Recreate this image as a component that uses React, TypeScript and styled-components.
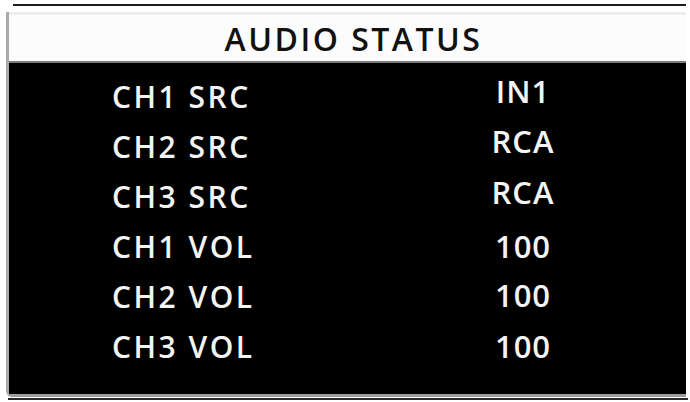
import React from "react";
import styled, { createGlobalStyle } from "styled-components";

const GlobalStyle = createGlobalStyle`
  html, body {
    margin: 0;
    padding: 0;
    background: #ffffff;
  }
  body {
    width: 690px;
    height: 402px;
    overflow: hidden;
    font-family: "Open Sans", "Noto Sans", sans-serif;
  }
`;

const Screen = styled.div`
  width: 690px;
  height: 402px;
  padding-top: 4px;
  box-sizing: border-box;
`;

const TopRule = styled.div`
  height: 2px;
  width: 673px;
  margin-left: 13px;
  background: #1c1c1c;
`;

const Panel = styled.div`
  margin-top: 6px;
  margin-left: 6px;
  width: 680px;
  border-left: 3px solid #a9aaa9;
  border-bottom: 3px solid #9c9d9c;
  border-bottom-left-radius: 6px;
  box-sizing: border-box;
  display: flex;
  flex-direction: column;
`;

const Header = styled.div`
  height: 46px;
  background: #fbfcfb;
  border-top: 3px solid #eceeed;
  border-bottom: 2px solid #7a7b7a;
  display: flex;
  align-items: center;
  justify-content: center;
  padding-left: 12px;
`;

const Title = styled.h1`
  margin: 0;
  font-size: 32px;
  font-weight: 600;
  letter-spacing: 2.5px;
  color: #111111;
`;

const Body = styled.div`
  height: 331px;
  background: #000000;
  box-sizing: border-box;
  padding: 8px 0 0 103px;
  display: grid;
  grid-template-columns: 300px 222px;
  grid-auto-rows: 50px;
  align-content: start;
`;

const Label = styled.div`
  display: flex;
  align-items: center;
  color: #f4f4f4;
  font-size: 30px;
  font-weight: 600;
  letter-spacing: 2.5px;
`;

const Value = styled.div<{ $lift?: number }>`
  display: flex;
  align-items: center;
  justify-content: center;
  color: #f4f4f4;
  font-size: 31px;
  font-weight: 600;
  letter-spacing: 1px;
  transform: translateY(${(p) => -(p.$lift ?? 0)}px);
`;

const BottomRule = styled.div`
  height: 2px;
  width: 680px;
  margin-left: 8px;
  margin-top: 1px;
  background: #2a2a2a;
`;

const rows = [
  { name: "CH1 SRC", value: "IN1", lift: 5 },
  { name: "CH2 SRC", value: "RCA", lift: 5 },
  { name: "CH3 SRC", value: "RCA", lift: 4 },
  { name: "CH1 VOL", value: "100", lift: 0 },
  { name: "CH2 VOL", value: "100", lift: 1 },
  { name: "CH3 VOL", value: "100", lift: 0 },
];

function App() {
  return (
    <Screen>
      <GlobalStyle />
      <TopRule />
      <Panel>
        <Header>
          <Title>AUDIO STATUS</Title>
        </Header>
        <Body>
          {rows.map((row) => (
            <React.Fragment key={row.name}>
              <Label>{row.name}</Label>
              <Value $lift={row.lift}>{row.value}</Value>
            </React.Fragment>
          ))}
        </Body>
      </Panel>
      <BottomRule />
    </Screen>
  );
}

export default App;
